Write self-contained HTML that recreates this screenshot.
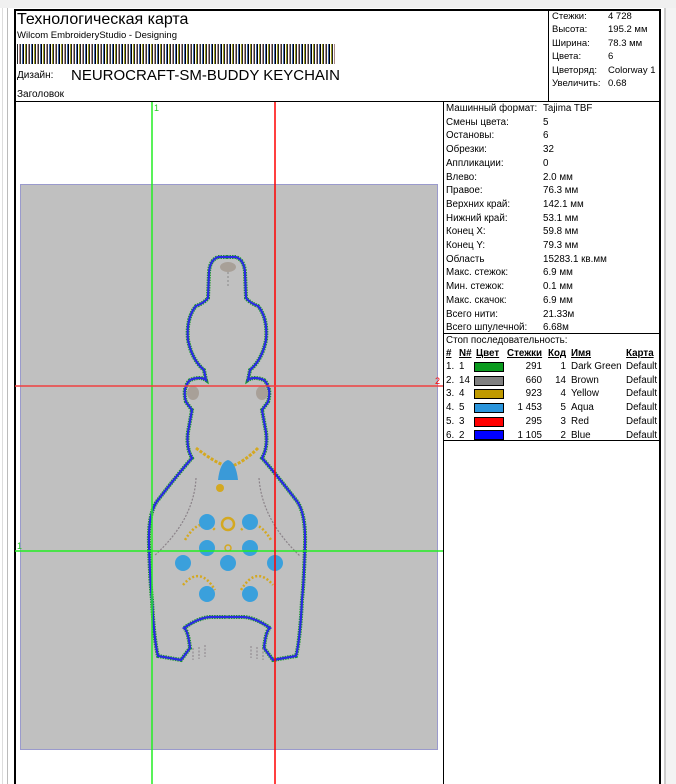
<!DOCTYPE html>
<html><head><meta charset="utf-8"><style>
*{margin:0;padding:0;box-sizing:border-box}
html,body{width:676px;height:784px;overflow:hidden}
body{background:#fff;position:relative;font-family:"Liberation Sans",sans-serif;color:#000}
.a{position:absolute}
.t{position:absolute;font-size:10px;line-height:14px;white-space:nowrap}
</style></head><body>
<div class="a" style="left:0;top:0;width:676px;height:8px;background:#f0f0f0"></div>
<div class="a" style="left:2px;top:8px;width:1px;height:776px;background:#ddd"></div>
<div class="a" style="left:7px;top:8px;width:1px;height:776px;background:#bbb"></div>
<div class="a" style="left:664px;top:8px;width:12px;height:776px;background:#f3f3f3;border-left:2px solid #ccc"></div>
<div class="a" style="left:14px;top:9px;width:647px;height:800px;border:2px solid #000"></div>
<div class="a" style="left:14px;top:101px;width:647px;height:1px;background:#000"></div>
<div class="a" style="left:548px;top:9px;width:1px;height:92px;background:#000"></div>
<div class="a" style="left:443px;top:101px;width:1px;height:683px;background:#000"></div>
<div class="a" style="left:443px;top:333px;width:218px;height:1px;background:#000"></div>
<div class="a" style="left:443px;top:440px;width:218px;height:1px;background:#000"></div>

<div class="t" style="left:17px;top:10px;font-size:16px;line-height:20px">Технологическая карта</div>
<div class="t" style="left:17px;top:29px;font-size:9.5px">Wilcom EmbroideryStudio - Designing</div>
<div class="a" style="left:17px;top:44px;width:318px;height:20px;background:repeating-linear-gradient(90deg,#222 0 1px,#fff 1px 2px,#a88 2px 3px,#333 3px 4px,#fff 4px 5px,#46a 5px 6px,#000 6px 7px,#fff 7px 8px,#992 8px 9px)"></div>
<div class="t" style="left:17px;top:69px">Дизайн:</div>
<div class="t" style="left:71px;top:67px;font-size:15px;line-height:18px">NEUROCRAFT-SM-BUDDY KEYCHAIN</div>
<div class="t" style="left:17px;top:88px">Заголовок</div>

<div class="t" style="left:552px;top:10px;font-size:9.5px;line-height:13.4px">Стежки:<br>Высота:<br>Ширина:<br>Цвета:<br>Цветоряд:<br>Увеличить:</div>
<div class="t" style="left:608px;top:10px;font-size:9.5px;line-height:13.4px">4 728<br>195.2 мм<br>78.3 мм<br>6<br>Colorway 1<br>0.68</div>

<div class="t" style="left:446px;top:102px;font-size:9.8px;line-height:13.7px">Машинный формат:<br>Смены цвета:<br>Остановы:<br>Обрезки:<br>Аппликации:<br>Влево:<br>Правое:<br>Верхних край:<br>Нижний край:<br>Конец X:<br>Конец Y:<br>Область<br>Макс. стежок:<br>Мин. стежок:<br>Макс. скачок:<br>Всего нити:<br>Всего шпулечной:</div>
<div class="t" style="left:543px;top:102px;font-size:9.8px;line-height:13.7px">Tajima TBF<br>5<br>6<br>32<br>0<br>2.0 мм<br>76.3 мм<br>142.1 мм<br>53.1 мм<br>59.8 мм<br>79.3 мм<br>15283.1 кв.мм<br>6.9 мм<br>0.1 мм<br>6.9 мм<br>21.33м<br>6.68м</div>

<div class="t" style="left:446px;top:334px;font-size:9.8px">Стоп последовательность:</div>
<div class="t" style="left:446px;top:347px;font-size:9.8px;font-weight:bold;text-decoration:underline">#</div>
<div class="t" style="left:459px;top:347px;font-size:9.8px;font-weight:bold;text-decoration:underline">N#</div>
<div class="t" style="left:476px;top:347px;font-size:9.8px;font-weight:bold;text-decoration:underline">Цвет</div>
<div class="t" style="left:507px;top:347px;font-size:9.8px;font-weight:bold;text-decoration:underline">Стежки</div>
<div class="t" style="left:548px;top:347px;font-size:9.8px;font-weight:bold;text-decoration:underline">Код</div>
<div class="t" style="left:571px;top:347px;font-size:9.8px;font-weight:bold;text-decoration:underline">Имя</div>
<div class="t" style="left:626px;top:347px;font-size:9.8px;font-weight:bold;text-decoration:underline">Карта</div>

<div class="t" style="left:446px;top:360px;font-size:9.8px;line-height:13.7px">1.<br>2.<br>3.<br>4.<br>5.<br>6.</div>
<div class="t" style="left:459px;top:360px;font-size:9.8px;line-height:13.7px">1<br>14<br>4<br>5<br>3<br>2</div>
<div class="t" style="left:500px;top:360px;width:42px;text-align:right;font-size:9.8px;line-height:13.7px">291<br>660<br>923<br>1 453<br>295<br>1 105</div>
<div class="t" style="left:550px;top:360px;width:16px;text-align:right;font-size:9.8px;line-height:13.7px">1<br>14<br>4<br>5<br>3<br>2</div>
<div class="t" style="left:571px;top:360px;font-size:9.8px;line-height:13.7px">Dark Green<br>Brown<br>Yellow<br>Aqua<br>Red<br>Blue</div>
<div class="t" style="left:626px;top:360px;font-size:9.8px;line-height:13.7px">Default<br>Default<br>Default<br>Default<br>Default<br>Default</div>
<div class="a" style="left:474px;top:362px;width:30px;height:10px;background:#0a9a1e;border:1px solid #000"></div>
<div class="a" style="left:474px;top:376px;width:30px;height:10px;background:#808080;border:1px solid #000"></div>
<div class="a" style="left:474px;top:389px;width:30px;height:10px;background:#c09a00;border:1px solid #000"></div>
<div class="a" style="left:474px;top:403px;width:30px;height:10px;background:#2a95dc;border:1px solid #000"></div>
<div class="a" style="left:474px;top:417px;width:30px;height:10px;background:#f00;border:1px solid #000"></div>
<div class="a" style="left:474px;top:430px;width:30px;height:10px;background:#00f;border:1px solid #000"></div>

<svg class="a" style="left:0;top:0" width="676" height="784">
<defs>
<path id="half" d="M227 257 L236 257 Q244 260 245 272 L246 298 Q250 303 258 306 Q268 318 266 340 Q262 360 250 370 L248 380 Q254 376 264 380 Q272 388 268 402 L262 410 L266 432 Q268 448 262 458 Q276 474 296 500 Q306 512 305 545 Q304 580 302 600 Q300 640 296 656 L273 660 L264 648 Q266 630 270 628 Q256 618 244 617 L227 617" fill="none"/>
</defs>
<rect x="20.5" y="184.5" width="417" height="565" fill="#c0c0c0" stroke="#9a9acc"/>
<use href="#half" stroke="#1a9a2a" stroke-width="4" stroke-dasharray="1.5 1"/>
<use href="#half" stroke="#1a9a2a" stroke-width="4" stroke-dasharray="1.5 1" transform="translate(454,0) scale(-1,1)"/>
<use href="#half" stroke="#2a2ae0" stroke-width="2.2"/>
<use href="#half" stroke="#2a2ae0" stroke-width="2.2" transform="translate(454,0) scale(-1,1)"/>
<ellipse cx="228" cy="267" rx="8" ry="5" fill="#a8a098"/>
<ellipse cx="193" cy="393" rx="6" ry="7" fill="#a8a098"/>
<ellipse cx="262" cy="393" rx="6" ry="7" fill="#a8a098"/>
<path d="M228 272 V286" stroke="#888" stroke-width="1" stroke-dasharray="2 2"/>
<path d="M196 448 Q214 462 226 466 M258 448 Q244 462 232 466" stroke="#d4a820" stroke-width="3" fill="none" stroke-dasharray="3 1.5"/>
<path d="M196 478 Q194 520 154 556 M259 478 Q262 520 300 556" stroke="#8a8288" stroke-width="1.2" fill="none" stroke-dasharray="2 1.5"/>
<path d="M218 480 Q220 462 228 460 Q236 462 238 480 Z" fill="#3a9ad8"/>
<circle cx="220" cy="488" r="4" fill="#d4a820"/>
<circle cx="228" cy="524" r="6" fill="none" stroke="#d4a820" stroke-width="2.5"/>
<circle cx="228" cy="548" r="3" fill="none" stroke="#d4a820" stroke-width="1.5"/>
<path d="M185 540 Q200 515 215 530 M241 530 Q256 515 271 540 M183 585 Q200 565 215 590 M241 590 Q256 565 273 585" stroke="#d4a820" stroke-width="2.5" fill="none" stroke-dasharray="2 2"/>
<g fill="#3aa0dc">
<circle cx="207" cy="522" r="8"/><circle cx="250" cy="522" r="8"/>
<circle cx="207" cy="548" r="8"/><circle cx="250" cy="548" r="8"/>
<circle cx="183" cy="563" r="8"/><circle cx="228" cy="563" r="8"/><circle cx="275" cy="563" r="8"/>
<circle cx="207" cy="594" r="8"/><circle cx="250" cy="594" r="8"/>
</g>
<g stroke="#8a8288" stroke-width="1" stroke-dasharray="2 1.5"><path d="M193 648 V660 M199 647 V659 M205 645 V657 M251 646 V658 M257 647 V659 M263 648 V660"/></g>
<line x1="152" y1="102" x2="152" y2="784" stroke="#22ee22" stroke-width="1.5"/>
<line x1="15" y1="551" x2="443" y2="551" stroke="#22ee22" stroke-width="1.5"/>
<line x1="275" y1="102" x2="275" y2="784" stroke="#f00" stroke-width="1.5"/>
<line x1="15" y1="386" x2="443" y2="386" stroke="#f04040" stroke-width="1.5"/>
<text x="154" y="111" font-size="9" fill="#22cc22" font-family="Liberation Sans">1</text>
<text x="17" y="549" font-size="9" fill="#22cc22" font-family="Liberation Sans">1</text>
<text x="435" y="384" font-size="9" fill="#f00" font-family="Liberation Sans">2</text>
</svg>
</body></html>
